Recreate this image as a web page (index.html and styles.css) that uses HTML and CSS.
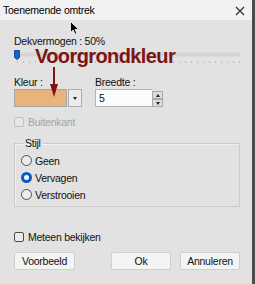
FILE: index.html
```html
<!DOCTYPE html>
<html>
<head>
<meta charset="utf-8">
<link rel="stylesheet" href="styles.css">
</head>
<body>
<div class="window">
  <div class="titlebar">
    <span class="title">Toenemende omtrek</span>
    <svg class="close" width="10" height="10" viewBox="0 0 10 10"><path d="M1 1L9 9M9 1L1 9" stroke="#2b2b2b" stroke-width="1.1"/></svg>
  </div>
  <div class="content">
    <div class="lbl">Dekvermogen : 50%</div>
    <div class="slider">
      <div class="track"></div>
      <div class="ticks"></div>
      <svg class="thumb" width="6" height="10" viewBox="0 0 6 10"><path d="M0.5 0.5H5.5V7.5L3 9.5L0.5 7.5Z" fill="#1a64c6" stroke="#0d4ea6" stroke-width="1"/></svg>
    </div>
    <div class="pair">
      <div class="col">
        <div class="lbl">Kleur :</div>
        <div class="combo">
          <div class="swatch"></div>
          <div class="dropbtn"><span class="tri-down"></span></div>
        </div>
      </div>
      <div class="col">
        <div class="lbl">Breedte :</div>
        <div class="spin">
          <div class="spin-input">5</div>
          <div class="spin-btns">
            <div class="spin-btn"><span class="tri-up"></span></div>
            <div class="spin-btn"><span class="tri-down"></span></div>
          </div>
        </div>
      </div>
    </div>
    <label class="check disabled"><span class="box"></span>Buitenkant</label>
    <fieldset class="group">
      <legend>Stijl</legend>
      <div class="radio"><span class="circle"></span>Geen</div>
      <div class="radio"><span class="circle on"></span>Vervagen</div>
      <div class="radio"><span class="circle"></span>Verstrooien</div>
    </fieldset>
    <label class="check meteen"><span class="box"></span>Meteen bekijken</label>
    <div class="buttons">
      <div class="btn">Voorbeeld</div>
      <div class="spacer"></div>
      <div class="btn">Ok</div>
      <div class="btn">Annuleren</div>
    </div>
  </div>
  <div class="annotation">Voorgrondkleur</div>
  <svg class="arrow" width="10" height="32" viewBox="0 0 10 32"><path d="M5 0V20" stroke="#7e1414" stroke-width="2"/><path d="M1 17H9L5 30Z" fill="#7e1414"/></svg>
  <svg class="cursor" width="11" height="14" viewBox="0 0 11 14"><path d="M0.5 0.5V11.5L3.2 9L5 13.2L6.8 12.4L5 8.4H8.8Z" fill="#000" stroke="#fff" stroke-width="0.8"/></svg>
</div>
</body>
</html>
```
FILE: styles.css
```css
html, body {
  margin: 0;
  padding: 0;
}
body {
  font-family: "Liberation Sans", Arial, sans-serif;
  font-size: 10.5px;
  letter-spacing: -0.25px;
  color: #111;
  background: #e2e2e2;
}
.window {
  position: relative;
  width: 255px;
  height: 284px;
  box-sizing: border-box;
  background: #e2e2e2;
  border-right: 3px solid #4c4c4c;
  overflow: hidden;
}
.titlebar {
  height: 20px;
  background: #f1f1f1;
  display: flex;
  align-items: center;
  justify-content: space-between;
  padding: 0 7px 0 3px;
}
.title {
  line-height: 14px;
  color: #000;
}
.close {
  display: block;
  margin-top: 1px;
}
.content {
  padding: 0 12px 0 14px;
}
.lbl {
  line-height: 14px;
}
.content > .lbl {
  margin-top: 14px;
}
.slider {
  position: relative;
  height: 15px;
  margin-top: 1px;
}
.track {
  position: absolute;
  left: 2px;
  right: 0;
  top: 3px;
  height: 5px;
  background: #d5d5d5;
  border: 1px solid #dcdcdc;
  box-sizing: border-box;
}
.ticks {
  position: absolute;
  left: 3px;
  right: 0;
  top: 12px;
  height: 2px;
  background: repeating-linear-gradient(90deg, #c0c0c0 0 1px, transparent 1px 6px);
}
.thumb {
  position: absolute;
  left: 0;
  top: 1px;
}
.pair {
  display: grid;
  grid-template-columns: 81px auto;
  margin-top: 11px;
}
.combo, .spin {
  display: flex;
  height: 18px;
}
.swatch {
  width: 53px;
  box-sizing: border-box;
  background: #e6b47c;
  border: 1px solid #a6a6a6;
}
.dropbtn {
  width: 14px;
  margin-left: 1px;
  box-sizing: border-box;
  border: 1px solid #adadad;
  background: #ececec;
  display: flex;
  align-items: center;
  justify-content: center;
}
.tri-down {
  width: 0;
  height: 0;
  border-left: 2.5px solid transparent;
  border-right: 2.5px solid transparent;
  border-top: 3px solid #222;
}
.tri-up {
  width: 0;
  height: 0;
  border-left: 2.5px solid transparent;
  border-right: 2.5px solid transparent;
  border-bottom: 3px solid #222;
}
.spin-input {
  width: 57px;
  box-sizing: border-box;
  background: #fbfbfb;
  border: 1px solid #b4b4b4;
  border-right: none;
  padding-left: 3px;
  line-height: 16px;
}
.spin-btns {
  display: flex;
  flex-direction: column;
  width: 11px;
  padding-top: 2px;
}
.spin-btn {
  flex: 1;
  box-sizing: border-box;
  border: 1px solid #a9a9a9;
  background: #dcdcdc;
  display: flex;
  align-items: center;
  justify-content: center;
}
.check {
  display: flex;
  align-items: center;
  line-height: 14px;
}
.check .box {
  width: 10px;
  height: 10px;
  box-sizing: border-box;
  border: 1px solid #4a4a4a;
  border-radius: 2px;
  background: #ebebeb;
  margin-right: 4px;
}
.check.disabled {
  margin-top: 8px;
  color: #a3a3a3;
}
.check.disabled .box {
  border-color: #c2c2c2;
  background: #e6e6e6;
}
.group {
  margin: 7px 0 0 0;
  padding: 2px 0 3px 6px;
  border: 1px solid #cacaca;
  box-shadow: inset 1px 1px 0 #f0f0f0;
}
.group legend {
  padding: 0 2px;
  margin-left: 2px;
  line-height: 14px;
}
.radio {
  display: flex;
  align-items: center;
  height: 17px;
}
.circle {
  width: 11px;
  height: 11px;
  box-sizing: border-box;
  border-radius: 50%;
  border: 1px solid #4e4e4e;
  background: #ececec;
  margin-right: 3px;
}
.circle.on {
  border: 3.5px solid #0b5cc0;
  background: #fff;
}
.check.meteen {
  margin-top: 23px;
}
.buttons {
  display: flex;
  gap: 9px;
  margin-top: 8px;
}
.spacer {
  flex: 1;
}
.btn {
  width: 60px;
  height: 18px;
  box-sizing: border-box;
  border: 1px solid #cfcfcf;
  border-radius: 2px;
  background: #f4f4f4;
  text-align: center;
  line-height: 16px;
}
.btn:first-child {
  width: 61px;
}
.annotation {
  position: absolute;
  left: 35px;
  top: 48px;
  font-family: "Liberation Sans", Arial, sans-serif;
  font-weight: bold;
  font-size: 20px;
  line-height: 16px;
  letter-spacing: -0.6px;
  color: #7e1414;
}
.arrow {
  position: absolute;
  left: 49px;
  top: 67px;
}
.cursor {
  position: absolute;
  left: 70px;
  top: 21px;
}
```
